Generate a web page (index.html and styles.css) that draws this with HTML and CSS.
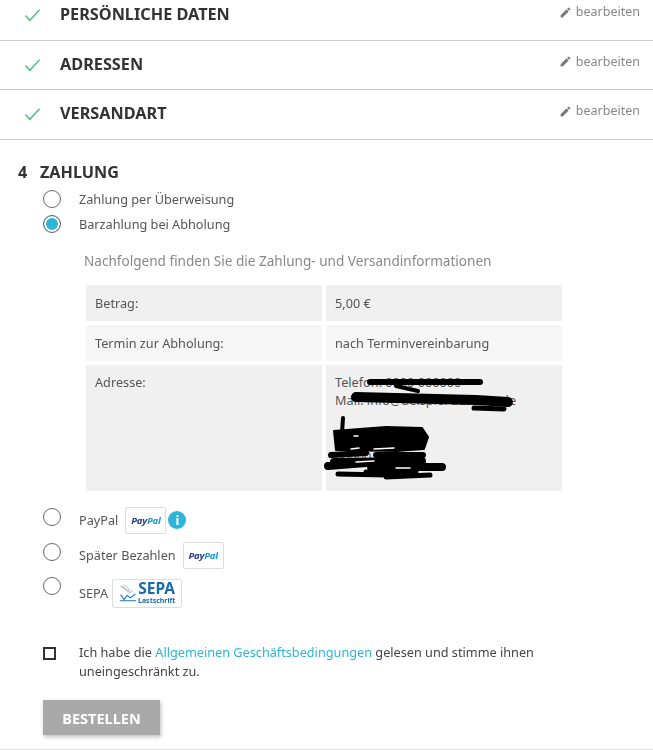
FILE: index.html
```html
<!DOCTYPE html>
<html lang="de">
<head>
<meta charset="utf-8">
<title>Zahlung</title>
<link rel="stylesheet" href="styles.css">
</head>
<body>
<div class="page">
  <section class="step step-first">
    <svg class="check" viewBox="0 0 18 14"><path d="M1.5 7.5 6.2 12.6 16.5 1.4"/></svg>
    <h2 class="step-title">PERSÖNLICHE DATEN</h2>
    <a class="edit"><svg class="pencil" viewBox="0 0 24 24"><path d="M3 17.25V21h3.75L17.81 9.94l-3.75-3.75L3 17.25zM20.71 7.04a1 1 0 0 0 0-1.41l-2.34-2.34a1 1 0 0 0-1.41 0l-1.83 1.83 3.75 3.75 1.83-1.83z"/></svg>bearbeiten</a>
  </section>
  <section class="step">
    <svg class="check" viewBox="0 0 18 14"><path d="M1.5 7.5 6.2 12.6 16.5 1.4"/></svg>
    <h2 class="step-title">ADRESSEN</h2>
    <a class="edit"><svg class="pencil" viewBox="0 0 24 24"><path d="M3 17.25V21h3.75L17.81 9.94l-3.75-3.75L3 17.25zM20.71 7.04a1 1 0 0 0 0-1.41l-2.34-2.34a1 1 0 0 0-1.41 0l-1.83 1.83 3.75 3.75 1.83-1.83z"/></svg>bearbeiten</a>
  </section>
  <section class="step">
    <svg class="check" viewBox="0 0 18 14"><path d="M1.5 7.5 6.2 12.6 16.5 1.4"/></svg>
    <h2 class="step-title">VERSANDART</h2>
    <a class="edit"><svg class="pencil" viewBox="0 0 24 24"><path d="M3 17.25V21h3.75L17.81 9.94l-3.75-3.75L3 17.25zM20.71 7.04a1 1 0 0 0 0-1.41l-2.34-2.34a1 1 0 0 0-1.41 0l-1.83 1.83 3.75 3.75 1.83-1.83z"/></svg>bearbeiten</a>
  </section>

  <section class="payment">
    <h2 class="payment-title"><span class="num">4</span>ZAHLUNG</h2>

    <div class="option opt-a"><span class="radio"></span><span>Zahlung per Überweisung</span></div>
    <div class="option opt-b"><span class="radio checked"></span><span>Barzahlung bei Abholung</span></div>

    <div class="details">
      <p class="details-intro">Nachfolgend finden Sie die Zahlung- und Versandinformationen</p>
      <div class="info-table">
        <div class="cell row-s">Betrag:</div>
        <div class="cell row-s">5,00 €</div>
        <div class="cell row-s alt">Termin zur Abholung:</div>
        <div class="cell row-s alt">nach Terminvereinbarung</div>
        <div class="cell row-l">Adresse:</div>
        <div class="cell row-l address">
          <div>Telefon: 0000 000000</div>
          <div>Mail: info@beispiel-adresse.de</div>
          <div class="addr-block">Musterstraße z<br>00000 Stadt</div>
          <svg class="scribble" viewBox="0 0 130 120">
            <path class="s6" d="M44 17H154"/>
            <path class="s4" d="M70 21 92 26"/>
            <path class="s9" d="M30 32 150 35 182 37"/>
            <path class="s5" d="M148 43 178 44"/>
            <path class="s4" d="M17 53 16 68"/>
            <path class="blob" d="M8 66 60 62 96 63 102 72 98 84 70 86 10 85Z"/>
            <path class="fleck" d="M25 84 33 83 M48 84 68 83 M28 71 32 71"/>
            <path class="s6" d="M5 90 40 88 M50 90 97 90"/>
            <path class="s8" d="M2 101 40 98 M45 102 116 102 M8 97 96 96"/>
            <path class="s5" d="M12 109 60 110 M60 112 104 110 M40 107 90 107"/>
            <path class="fleck" d="M30 97 48 96 M70 103 84 103"/>
          </svg>
        </div>
      </div>
    </div>

    <div class="option opt-c">
      <span class="radio"></span><span>PayPal</span>
      <span class="logo"><span class="pp"><i class="pay">Pay</i><i class="pal">Pal</i></span></span>
      <span class="info">i</span>
    </div>
    <div class="option opt-d">
      <span class="radio"></span><span>Später Bezahlen</span>
      <span class="logo"><span class="pp"><i class="pay">Pay</i><i class="pal">Pal</i></span></span>
    </div>
    <div class="option opt-e">
      <span class="radio"></span><span>SEPA</span>
      <span class="logo logo-sepa">
        <svg class="sepa-icon" viewBox="0 0 22 22"><path class="sepa-pen" d="M2 2 14 11"/><path class="sepa-pen2" d="M5 1 17 10"/><path class="sepa-line" d="M2 13 6 19 10 14 14 17 20 12M1 20.5H21"/></svg>
        <span class="sepa-text"><b>SEPA</b><small>Lastschrift</small></span>
      </span>
    </div>

    <label class="terms">
      <span class="box"></span>
      <span class="terms-text">Ich habe die <a class="link">Allgemeinen Geschäftsbedingungen</a> gelesen und stimme ihnen uneingeschränkt zu.</span>
    </label>

    <button class="submit" type="button">BESTELLEN</button>
  </section>
</div>
</body>
</html>
```

FILE: styles.css
```css
* { box-sizing: border-box; }
html, body { margin: 0; padding: 0; background: #fff; }
body { font-family: "Noto Sans", sans-serif; font-size: 12.7px; color: #444; overflow: hidden; height: 750px; }
.page { width: 653px; height: 750px; overflow: hidden; border-bottom: 1px solid #ddd; filter: blur(0.35px); }

.step { position: relative; display: flex; align-items: flex-start; height: 49.5px; padding: 13px 13px 0 24px; border-bottom: 1.5px solid #ccc; }
.step-first { height: 40.5px; padding-top: 4px; }
.check { width: 17px; height: 14px; margin-top: 4px; flex: none; }
.check path { fill: none; stroke: #52c47e; stroke-width: 1.6; }
.step-title { margin: 0 0 0 19px; font-size: 16.25px; line-height: 20px; font-weight: 700; color: #333; flex: 1; }
.edit { display: flex; align-items: center; gap: 4px; margin-top: -1px; font-size: 12.5px; line-height: 18px; color: #888; }
.pencil { width: 13px; height: 13px; fill: #777; }

.payment { padding: 21px 0 0 18px; }
.payment-title { margin: 0; font-size: 16.2px; line-height: 22px; font-weight: 700; color: #333; }
.num { display: inline-block; width: 22px; }

.option { display: flex; align-items: center; height: 25px; padding-left: 25px; color: #555; }
.radio { width: 18px; height: 18px; margin-right: 18px; flex: none; border: 1.5px solid #666; border-radius: 50%; background: #fff; }
.radio.checked { background: #2cb5d9; box-shadow: inset 0 0 0 2px #fff; }
.opt-a { margin-top: 4px; }

.details { padding: 14px 0 0 66px; }
.details-intro { margin: 0 0 14px; font-size: 13.57px; line-height: 20px; color: #888; }
.info-table { display: grid; grid-template-columns: 236px 236px; gap: 4px; margin-left: 2px; }
.cell { padding: 0 9px; background: #f0f0f0; color: #555; }
.row-s { display: flex; align-items: center; height: 36.5px; }
.row-s.alt { background: #f6f6f6; height: 36px; padding-bottom: 1px; }
.row-l { height: 126px; padding-top: 8px; line-height: 18px; }
.address { position: relative; }
.addr-block { margin-top: 20px; }
.scribble { position: absolute; left: 0; top: 0; width: 130px; height: 120px; overflow: visible; }
.scribble path { fill: none; stroke: #000; stroke-linecap: round; stroke-linejoin: round; }
.scribble .blob { fill: #000; stroke-width: 2; }
.scribble .fleck { stroke: #fff; stroke-width: 1.5; }
.s4 { stroke-width: 4; }
.s5 { stroke-width: 5; }
.s6 { stroke-width: 6; }
.s8 { stroke-width: 8; }
.s9 { stroke-width: 10; }

.opt-c { margin-top: 14px; height: 30px; }
.opt-d { margin-top: 5px; height: 30px; }
.opt-e { margin-top: 8px; height: 30px; }
.opt-c .radio, .opt-d .radio { position: relative; top: -3px; }
.opt-e .radio { position: relative; top: -7px; }
.logo { display: flex; align-items: center; justify-content: center; width: 41px; height: 27px; margin-left: 7px; border: 1px solid #ddd; border-radius: 2px; background: #fff; }
.pp { font-size: 9.5px; font-weight: 700; letter-spacing: -0.2px; }
.pay { color: #253b80; }
.pal { color: #179bd7; }
.info { width: 18px; height: 18px; margin-left: 2px; border-radius: 50%; background: #2cb5d9; color: #fff; font-size: 13px; font-weight: 700; line-height: 18px; text-align: center; }
.logo-sepa { width: 70px; height: 29px; gap: 1px; margin-left: 4px; }
.sepa-icon { width: 18px; height: 20px; }
.sepa-pen { stroke: #9db4c6; stroke-width: 1.5; fill: none; }
.sepa-pen2 { stroke: #c5d3de; stroke-width: 1.5; fill: none; }
.sepa-line { stroke: #1b75bb; stroke-width: 1.3; fill: none; }
.sepa-text { display: flex; flex-direction: column; align-items: center; gap: 1px; color: #1c6aae; line-height: 1; }
.sepa-text b { font-size: 15.5px; line-height: 15px; }
.sepa-text small { font-size: 7px; line-height: 8px; font-weight: 700; }

.terms { display: flex; align-items: flex-start; margin: 35px 0 0 25px; line-height: 19px; color: #444; }
.box { width: 13px; height: 13px; margin: 4px 23px 0 0; flex: none; border: 2px solid #333; }
.terms-text { width: 490px; }
.link { color: #2cb5d9; }

.submit { display: block; width: 117px; height: 35px; margin: 19px 0 0 25px; padding: 0; border: 0; background: #a9a9a9; color: #fff; font-family: inherit; font-size: 14.5px; font-weight: 700; box-shadow: 1px 2px 4px rgba(0,0,0,.25); }
```
